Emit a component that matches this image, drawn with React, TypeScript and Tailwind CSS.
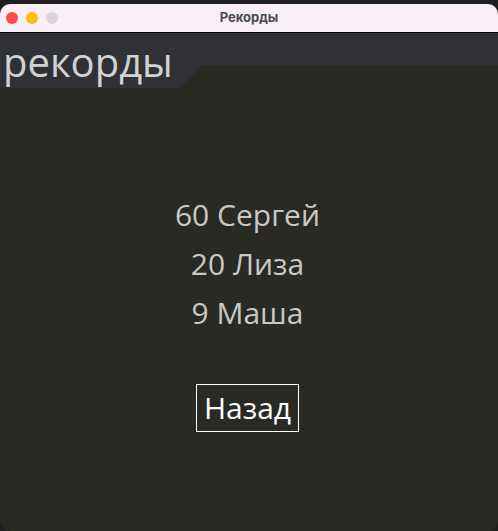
const records = [
  { score: 60, name: "Сергей" },
  { score: 20, name: "Лиза" },
  { score: 9, name: "Маша" },
];

const App = () => {
  return (
    <div className="w-[498px] h-[531px] bg-[#1e1e1e] pt-[4px] flex flex-col font-['Open_Sans',sans-serif]">
      <div className="flex-1 flex flex-col rounded-[10px] overflow-hidden bg-[#292a24]">
        {/* title bar */}
        <div className="relative h-[29px] shrink-0 bg-[#f8eff6] border-b border-black flex items-center justify-center">
          <div className="absolute left-[6px] top-[8px] flex gap-[8px]">
            <span className="w-[12px] h-[12px] rounded-full bg-[#fe4b4a]" />
            <span className="w-[12px] h-[12px] rounded-full bg-[#fdbb13]" />
            <span className="w-[12px] h-[12px] rounded-full bg-[#d8d2d9]" />
          </div>
          <span className="text-[13px] font-bold text-[#4b4a4d] font-['Inter',sans-serif]">Рекорды</span>
        </div>

        {/* header with tab */}
        <div className="relative h-[55px] shrink-0">
          <div className="h-[32px] bg-[#303136]" />
          <div className="h-[23px] w-[202px] bg-[#303136] [clip-path:polygon(0_0,100%_0,calc(100%-22px)_100%,0_100%)]" />
          <span className="absolute left-[3px] top-[1px] text-[40px] leading-[56px] text-[#d2d2d2]">
            рекорды
          </span>
        </div>

        {/* records */}
        <div className="flex flex-col items-center pt-[102px] pr-[3px]">
          {records.map((r) => (
            <div key={r.name} className="text-[30px] leading-[49px] text-[#c8c8c8]">
              {r.score} {r.name}
            </div>
          ))}
          <button className="mt-[47px] h-[48px] px-[7px] border border-white text-[30px] leading-[46px] text-white">
            Назад
          </button>
        </div>
      </div>
    </div>
  );
};

export default App;
